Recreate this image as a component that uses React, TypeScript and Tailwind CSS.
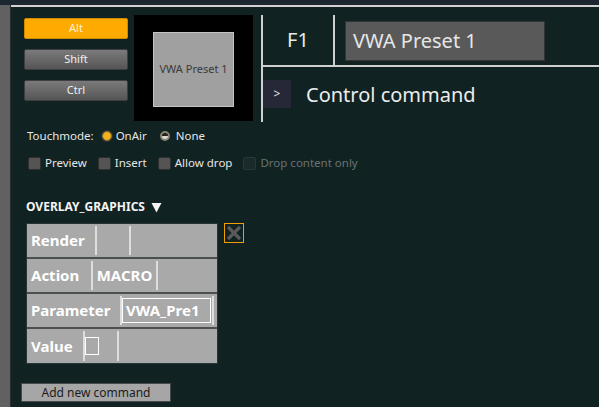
import React from 'react';

const font = { fontFamily: '"Noto Sans", "Open Sans", sans-serif' };

const KeyButton: React.FC<{ label: string; active?: boolean }> = ({ label, active }) => (
  <div
    className={`h-[21px] w-[104px] flex items-center justify-center text-[11px] rounded-[2px] border ${
      active
        ? 'bg-[#ffaa00] border-[#d08a00] text-[#fff4dc]'
        : 'bg-gradient-to-b from-[#7a7a7a] via-[#686868] to-[#555] border-[#3e3e44] text-[#f0f0f0]'
    }`}
  >
    {label}
  </div>
);

const Check: React.FC<{ label: string; disabled?: boolean }> = ({ label, disabled }) => (
  <div className="flex items-center">
    <span
      className={`w-[13px] h-[13px] rounded-[2px] border ${
        disabled ? 'bg-[#1a2a2a] border-[#2a3838]' : 'bg-[#545454] border-[#303030]'
      }`}
    />
    <span className={`ml-[4px] text-[11.5px] ${disabled ? 'text-[#6b7272]' : 'text-[#e6e6e6]'}`}>{label}</span>
  </div>
);

const Sep: React.FC = () => <div className="w-[2px] my-[2px] bg-[#dedede]" />;

export default function App() {
  return (
    <div className="w-[599px] h-[407px] bg-[#112222] flex flex-col overflow-hidden" style={font}>
      <div className="h-[5px] bg-[#1c2731] shrink-0" />
      <div className="flex flex-1">
        <div className="w-[11px] bg-[#616161] border-r border-[#2e2e2e] shrink-0" />
        <div className="flex-1 border-t-2 border-[#d2d2d2] flex flex-col">
          {/* top area */}
          <div className="flex items-start mt-[8px] h-[107px]">
            <div className="flex flex-col gap-[10px] ml-[13px] mt-[3px]">
              <KeyButton label="Alt" active />
              <KeyButton label="Shift" />
              <KeyButton label="Ctrl" />
            </div>
            <div className="ml-[6px] w-[119px] h-[106px] bg-black flex items-center justify-center pt-[3px]">
              <div className="w-[81px] h-[75px] bg-[#a0a0a0] border border-[#c4c4c4] flex items-center justify-center text-[11px] text-[#3a3a3a]">
                VWA Preset 1
              </div>
            </div>
            <div className="ml-[8px] flex-1 h-[107px] border-l-2 border-[#cfcfcf] flex flex-col">
              <div className="h-[52px] flex border-b-2 border-[#cfcfcf]">
                <div className="w-[72px] border-r-2 border-[#cfcfcf] flex items-center justify-center text-[20px] text-[#e8e8e8]">
                  F1
                </div>
                <div className="ml-[10px] mt-[6px] w-[200px] h-[40px] bg-[#595959] border border-[#333] flex items-center pl-[7px] text-[20px] text-[#e6e6e6]">
                  VWA Preset 1
                </div>
              </div>
              <div className="flex items-start">
                <div className="mt-[13px] w-[28px] h-[28px] bg-[#262838] flex items-center justify-center text-[12px] text-[#e6e6e6]">
                  &gt;
                </div>
                <span className="ml-[15px] mt-[14px] text-[20px] leading-[28px] text-[#ececec]">Control command</span>
              </div>
            </div>
          </div>

          {/* touchmode */}
          <div className="flex items-center ml-[16px] mt-[6px] h-[16px] text-[11.5px] text-[#e6e6e6]">
            <span>Touchmode:</span>
            <span className="ml-[8px] w-[10px] h-[10px] rounded-full bg-[#f2b11a] border border-[#7a6a40] shadow-[0_0_0_1px_#34342a]" />
            <span className="ml-[4px]">OnAir</span>
            <span className="ml-[13px] w-[10px] h-[10px] rounded-full border-2 border-[#8a8470] bg-gradient-to-b from-[#222] from-50% to-[#d8d8d8] to-50%" />
            <span className="ml-[6px]">None</span>
          </div>

          {/* checkboxes */}
          <div className="flex items-center ml-[17px] mt-[11px] h-[16px] gap-[11px]">
            <Check label="Preview" />
            <Check label="Insert" />
            <Check label="Allow drop" />
            <Check label="Drop content only" disabled />
          </div>

          {/* overlay */}
          <div className="ml-[15px] mt-[28px] h-[16px] flex items-center text-[12px] font-bold text-[#f4f4f4]">
            OVERLAY_GRAPHICS
            <svg className="ml-[6px]" width="11" height="11" viewBox="0 0 11 11">
              <path d="M0.5 1 L10.5 1 L5.5 10.5 Z" fill="#f4f4f4" />
            </svg>
          </div>

          <div className="flex items-start ml-[15px] mt-[8px]">
            <div className="w-[192px] border border-[#2a3434] bg-[#a9a9a9] text-[15px] font-bold text-white">
              <div className="h-[35px] flex border-b-2 border-[#4a4f4f]">
                <div className="w-[68px] pl-[4px] flex items-center">Render</div>
                <Sep />
                <div className="w-[32px]" />
                <Sep />
              </div>
              <div className="h-[35px] flex border-b-2 border-[#4a4f4f]">
                <div className="w-[64px] pl-[4px] flex items-center">Action</div>
                <Sep />
                <div className="w-[63px] flex items-center justify-center">MACRO</div>
                <Sep />
              </div>
              <div className="h-[35px] flex border-b-2 border-[#4a4f4f]">
                <div className="w-[93px] pl-[4px] flex items-center">Parameter</div>
                <Sep />
                <div className="w-[90px] flex items-center">
                  <div className="w-[89px] h-[25px] border border-white flex items-center pl-[3px]">VWA_Pre1</div>
                </div>
                <Sep />
              </div>
              <div className="h-[34px] flex">
                <div className="w-[56px] pl-[4px] flex items-center">Value</div>
                <Sep />
                <div className="w-[32px] flex items-center">
                  <div className="w-[14px] h-[18px] border border-white" />
                </div>
                <Sep />
              </div>
            </div>
            <div className="ml-[6px] w-[20px] h-[20px] border border-[#f0a000] flex items-center justify-center">
              <svg width="16" height="16" viewBox="0 0 16 16">
                <path d="M2 2 L14 14 M14 2 L2 14" stroke="#5a5a5a" strokeWidth="3.2" />
              </svg>
            </div>
          </div>

          <div className="ml-[10px] mt-[19px] w-[150px] h-[19px] bg-[#a6a6a6] border border-[#4a4a4a] flex items-center justify-center text-[12px] text-[#1c1c1c]">
            Add new command
          </div>
        </div>
      </div>
    </div>
  );
}
